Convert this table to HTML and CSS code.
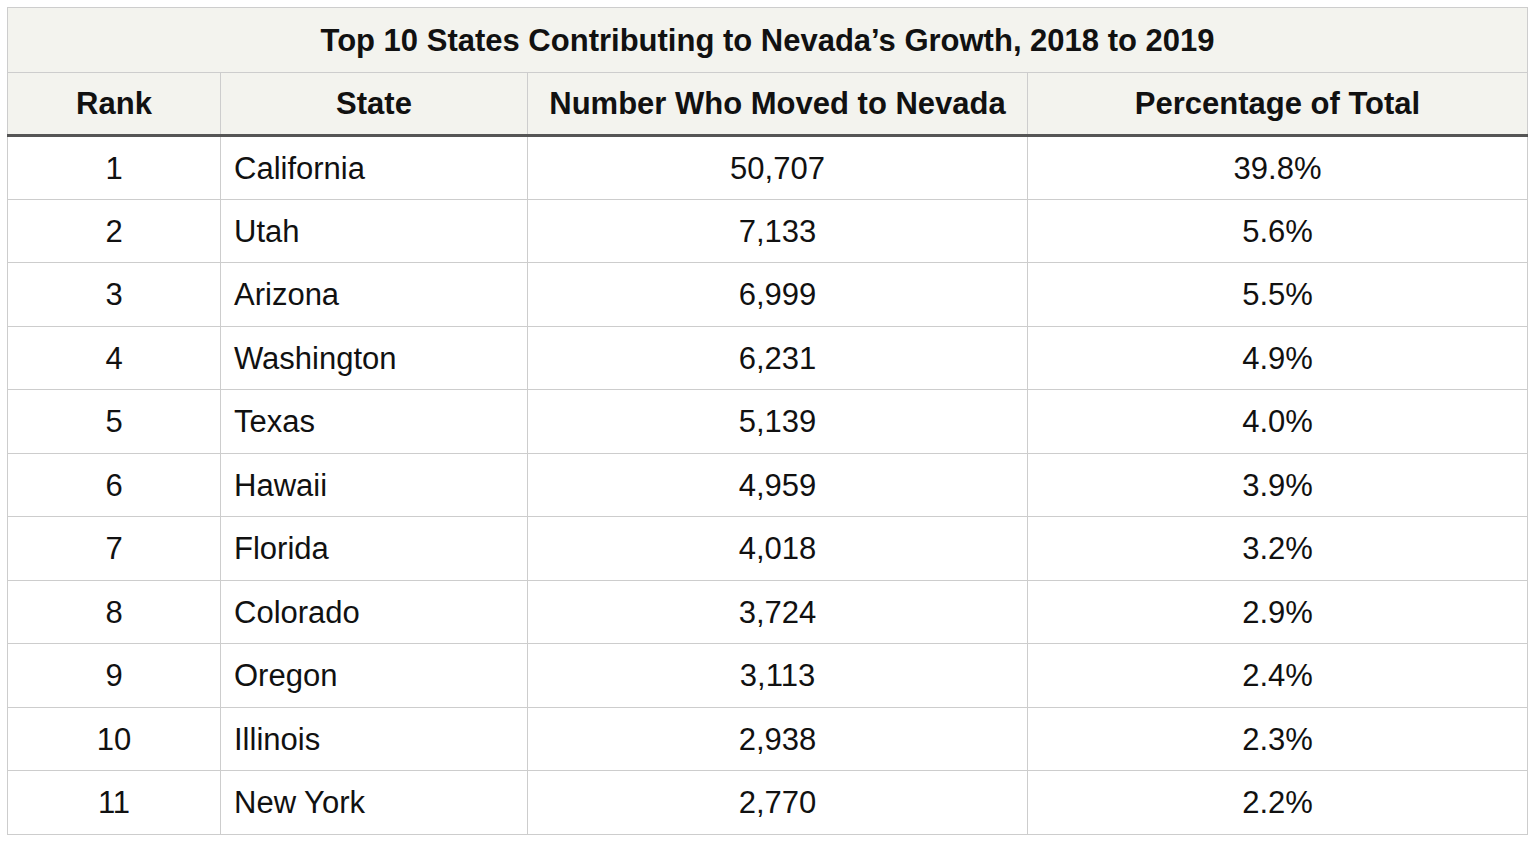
FILE: index.html
```html
<!DOCTYPE html>
<html>
<head>
<meta charset="utf-8">
<link rel="stylesheet" href="styles.css">
</head>
<body>
<table class="data">
  <colgroup>
    <col class="c-rank"><col class="c-state"><col class="c-num"><col class="c-pct">
  </colgroup>
  <thead>
    <tr class="title-row"><th colspan="4">Top 10 States Contributing to Nevada’s Growth, 2018 to 2019</th></tr>
    <tr class="head-row"><th>Rank</th><th>State</th><th>Number Who Moved to Nevada</th><th>Percentage of Total</th></tr>
  </thead>
  <tbody>
    <tr><td class="ctr">1</td><td class="st">California</td><td class="ctr">50,707</td><td class="ctr">39.8%</td></tr>
    <tr><td class="ctr">2</td><td class="st">Utah</td><td class="ctr">7,133</td><td class="ctr">5.6%</td></tr>
    <tr><td class="ctr">3</td><td class="st">Arizona</td><td class="ctr">6,999</td><td class="ctr">5.5%</td></tr>
    <tr><td class="ctr">4</td><td class="st">Washington</td><td class="ctr">6,231</td><td class="ctr">4.9%</td></tr>
    <tr><td class="ctr">5</td><td class="st">Texas</td><td class="ctr">5,139</td><td class="ctr">4.0%</td></tr>
    <tr><td class="ctr">6</td><td class="st">Hawaii</td><td class="ctr">4,959</td><td class="ctr">3.9%</td></tr>
    <tr><td class="ctr">7</td><td class="st">Florida</td><td class="ctr">4,018</td><td class="ctr">3.2%</td></tr>
    <tr><td class="ctr">8</td><td class="st">Colorado</td><td class="ctr">3,724</td><td class="ctr">2.9%</td></tr>
    <tr><td class="ctr">9</td><td class="st">Oregon</td><td class="ctr">3,113</td><td class="ctr">2.4%</td></tr>
    <tr><td class="ctr">10</td><td class="st">Illinois</td><td class="ctr">2,938</td><td class="ctr">2.3%</td></tr>
    <tr><td class="ctr">11</td><td class="st">New York</td><td class="ctr">2,770</td><td class="ctr">2.2%</td></tr>
  </tbody>
</table>
</body>
</html>
```

FILE: styles.css
```css
html, body {
  margin: 0;
  padding: 0;
  background: #ffffff;
}
body {
  padding: 7px 0 0 7px;
  font-family: "Liberation Sans", Arial, Helvetica, sans-serif;
  color: #111111;
}
.data {
  border-collapse: collapse;
  width: 1520px;
  table-layout: fixed;
  font-size: 31px;
}
.c-rank { width: 213px; }
.c-state { width: 307px; }
.c-num { width: 500px; }
.c-pct { width: 500px; }
.data th, .data td {
  border: 1.5px solid #cdcdcd;
  padding: 0;
  vertical-align: middle;
}
.data th {
  font-weight: bold;
  background: #f3f3ee;
  text-align: center;
}
.title-row th {
  height: 63px;
  padding-top: 1px;
}
.head-row th {
  height: 60px;
  border-bottom: 3px solid #555555;
  padding-top: 1px;
}
.data tbody tr {
  height: 63.5px;
}
.data tbody td {
  padding-top: 2px;
}
.ctr {
  text-align: center;
}
.st {
  text-align: left;
  padding-left: 13px !important;
}
```
